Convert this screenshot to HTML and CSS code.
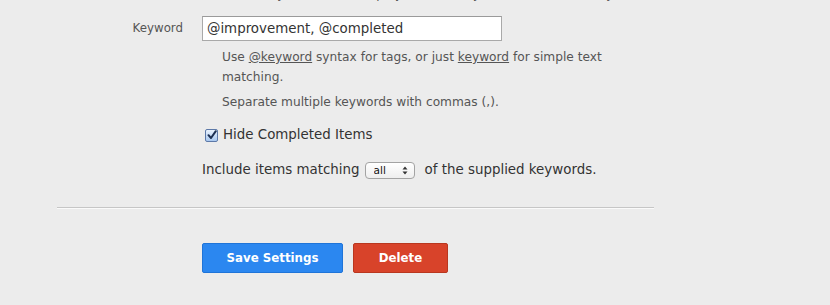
FILE: index.html
```html
<html lang="en">

<head>
    <meta charset="UTF-8">
    <meta name="viewport" content="width=device-width, initial-scale=1.0">
    <title>List Settings</title>
    <link rel="stylesheet" href="styles.css">
</head>

<body>
    <div class="settings">
        <div class="row">
            <div class="label"></div>
            <div class="field">
                <p class="help clipped">Show only the items in a project, or in any list, that match a keyword, as below.</p>
            </div>
        </div>
        <div class="row">
            <label class="label" for="keyword">Keyword</label>
            <div class="field">
                <input type="text" id="keyword" value="@improvement, @completed">
                <div class="help">
                    <p>Use <u>@keyword</u> syntax for tags, or just <u>keyword</u> for simple text matching.</p>
                    <p>Separate multiple keywords with commas (,).</p>
                </div>
            </div>
        </div>
        <div class="option check-row">
            <label class="check">
                <span class="box">
                    <svg width="10" height="10" viewBox="0 0 10 10">
                        <path d="M1.5 5.2 L4 8 L8.8 1.2" fill="none" stroke="#1c2f52" stroke-width="2" stroke-linecap="round" stroke-linejoin="round"/>
                    </svg>
                </span>
                <span>Hide Completed Items</span>
            </label>
        </div>
        <div class="option match-row">
            <span>Include items matching</span>
            <span class="select">
                <select>
                    <option>all</option>
                    <option>any</option>
                </select>
                <svg class="arrows" width="6" height="9" viewBox="0 0 6 9">
                    <path d="M0.5 3.5 L3 0.5 L5.5 3.5 Z M0.5 5.5 L3 8.5 L5.5 5.5 Z" fill="#333"/>
                </svg>
            </span>
            <span>of the supplied keywords.</span>
        </div>
        <hr class="divider">
        <div class="actions">
            <button class="btn save">Save Settings</button>
            <button class="btn delete">Delete</button>
        </div>
    </div>
</body>

</html>
```

FILE: styles.css
```css
:root {
    --text: #333333;
    --muted: #555555;
    --bg: #ececec;
}

* {
    padding: 0;
    margin: 0;
    box-sizing: border-box;
}

body {
    font-family: "DejaVu Sans", Verdana, sans-serif;
    background-color: var(--bg);
    color: var(--text);
    overflow: hidden;
}

.settings {
    margin-left: 57px;
    width: 597px;
}

.row {
    display: flex;
    align-items: flex-start;
}

.label {
    width: 126px;
    margin-right: 19px;
    flex-shrink: 0;
    text-align: right;
    font-size: 11.8px;
    line-height: 25px;
    color: var(--muted);
}

.field {
    width: 420px;
}

input[type="text"] {
    display: block;
    width: 300px;
    height: 25px;
    padding: 0 4px;
    border: 1px solid #a9a9a9;
    border-top-color: #9a9a9a;
    background: #fff;
    font-family: inherit;
    font-size: 13.4px;
    color: var(--text);
    outline: none;
}

.help {
    padding-left: 20px;
    margin-top: 6px;
    font-size: 12.2px;
    line-height: 20px;
    color: var(--muted);
}

.help p {
    margin-bottom: 5px;
}

.help.clipped {
    margin-top: -16px;
    margin-bottom: 12px;
    white-space: nowrap;
}

.option {
    padding-left: 145px;
    font-size: 13.4px;
    line-height: 20px;
    color: var(--text);
}

.check-row {
    margin-top: 8px;
}

.check {
    display: flex;
    align-items: center;
    gap: 5px;
    padding-left: 3px;
}

.box {
    display: flex;
    align-items: center;
    justify-content: center;
    width: 13px;
    height: 13px;
    border: 1px solid #5d79a8;
    border-radius: 2px;
    background: linear-gradient(#e9f2fd, #a9c8ef);
}

.match-row {
    margin-top: 15px;
    display: flex;
    align-items: center;
    white-space: nowrap;
}

.select {
    position: relative;
    display: inline-block;
    margin: 0 10px 0 5px;
}

.select select {
    appearance: none;
    -webkit-appearance: none;
    display: block;
    width: 50px;
    height: 17px;
    padding: 0 0 0 8px;
    border: 1px solid #a3a3a3;
    border-radius: 4px;
    background: linear-gradient(#ffffff, #eeeeee);
    font-family: inherit;
    font-size: 10.5px;
    color: #111;
}

.arrows {
    position: absolute;
    right: 7px;
    top: 4px;
    pointer-events: none;
}

.divider {
    margin-top: 27px;
    border: 0;
    border-top: 1px solid #c6c6c6;
    border-bottom: 1px solid #fafafa;
}

.actions {
    display: flex;
    gap: 10px;
    padding-left: 145px;
    margin-top: 34px;
}

.btn {
    height: 30px;
    border-radius: 2px;
    font-family: inherit;
    font-weight: bold;
    font-size: 11.8px;
    color: #fff;
    cursor: pointer;
}

.save {
    width: 141px;
    background-color: #2b87f0;
    border: 1px solid #1f74d8;
}

.delete {
    width: 95px;
    background-color: #d8432a;
    border: 1px solid #b9371f;
}
```
